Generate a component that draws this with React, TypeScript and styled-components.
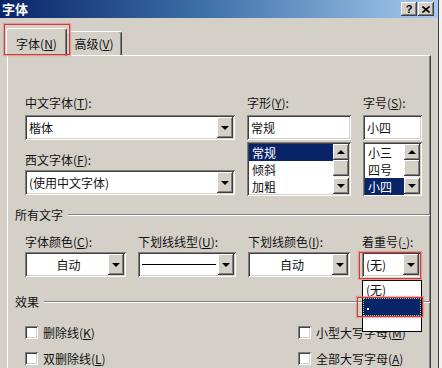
import React from 'react';
import styled, { createGlobalStyle, css } from 'styled-components';

const face = '#d4d0c8';
const shadow = '#808080';
const dark = '#404040';
const navy = '#0a246a';

const GlobalStyle = createGlobalStyle`
  html, body {
    margin: 0;
    padding: 0;
    height: 100%;
    overflow: hidden;
    background: #f2f2f2;
  }
  body {
    font-family: "Noto Sans CJK SC", "Liberation Sans", sans-serif;
    font-size: 12px;
    color: #111;
  }
  #root { height: 100%; }
`;

const raised = css`
  box-shadow: inset -1px -1px ${dark}, inset 1px 1px #fff, inset -2px -2px ${shadow},
    inset 2px 2px ${face};
`;

const sunken = css`
  box-shadow: inset 1px 1px ${shadow}, inset -1px -1px #fff, inset 2px 2px ${dark},
    inset -2px -2px ${face};
`;

const Dialog = styled.div`
  width: 439px;
  height: 368px;
  box-sizing: border-box;
  background: ${face};
  border-right: 1px solid ${dark};
  display: flex;
  flex-direction: column;
`;

const TitleBar = styled.div`
  height: 18px;
  flex-shrink: 0;
  display: flex;
  align-items: center;
  padding: 0 4px 0 2px;
  background: linear-gradient(to right, #0a246a 0%, #3a6ea5 45%, #a6caf0 100%);
`;

const Title = styled.span`
  flex: 1;
  color: #fff;
  font-weight: bold;
  font-size: 13px;
  line-height: 18px;
`;

const CaptionButton = styled.div`
  width: 16px;
  height: 14px;
  margin-left: 1px;
  background: ${face};
  ${raised};
  display: flex;
  align-items: center;
  justify-content: center;
  font-family: "Liberation Sans", sans-serif;
  font-weight: bold;
  font-size: 11px;
  color: #000;
`;

const Body = styled.div`
  flex: 1;
  display: flex;
  flex-direction: column;
  padding: 10px 7px 0 7px;
`;

const TabStrip = styled.div`
  height: 27px;
  display: flex;
  align-items: flex-end;
`;

const Tab = styled.div<{ $active?: boolean }>`
  position: relative;
  box-sizing: border-box;
  display: flex;
  align-items: center;
  justify-content: center;
  background: ${face};
  border-top: 1px solid #fff;
  border-left: 1px solid #fff;
  border-right: 1px solid ${dark};
  box-shadow: inset -1px 0 ${shadow};
  border-radius: 3px 3px 0 0;
  white-space: nowrap;
  ${(p) =>
    p.$active
      ? css`
          width: 61px;
          height: 28px;
          margin-left: -1px;
          margin-bottom: -1px;
          padding-top: 2px;
          z-index: 2;
        `
      : css`
          width: 55px;
          height: 24px;
          border-left: none;
        `}
`;

const Key = styled.span<{ $latin?: boolean }>`
  text-decoration: underline;
  text-underline-offset: 1px;
  ${(p) => p.$latin && `font-family: "Liberation Sans", sans-serif;`}
`;

const Panel = styled.div`
  flex: 1;
  position: relative;
  border-top: 1px solid #fff;
  border-left: 1px solid #fff;
  border-right: 1px solid ${dark};
  box-shadow: inset -1px 0 ${shadow};
  padding: 40px 0 0 7px;
  display: flex;
  flex-direction: column;
`;

const Group = styled.div<{ $mt?: number }>`
  display: flex;
  gap: 12px;
  padding-left: 10px;
  margin-top: ${(p) => p.$mt ?? 0}px;
`;

const Field = styled.div<{ $w: number }>`
  position: relative;
  width: ${(p) => p.$w}px;
  display: flex;
  flex-direction: column;
`;

const Label = styled.div<{ $mt?: number }>`
  height: 14px;
  line-height: 14px;
  white-space: nowrap;
  margin-top: ${(p) => p.$mt ?? 0}px;
`;

const ComboBox = styled.div<{ $mt?: number }>`
  position: relative;
  height: 25px;
  box-sizing: border-box;
  padding: 2px;
  margin-top: ${(p) => p.$mt ?? 3}px;
  background: #fff;
  ${sunken};
  display: flex;
`;

const ComboText = styled.div<{ $center?: boolean }>`
  flex: 1;
  display: flex;
  align-items: center;
  padding-left: 2px;
  justify-content: ${(p) => (p.$center ? 'center' : 'flex-start')};
  white-space: nowrap;
  overflow: hidden;
`;

const LineSample = styled.div`
  flex: 1;
  align-self: center;
  height: 1px;
  margin: 0 2px 0 2px;
  background: #000;
`;

const DropButton = styled.div`
  width: 16px;
  background: ${face};
  ${raised};
  display: flex;
  align-items: center;
  justify-content: center;
`;

const Arrow = styled.span<{ $up?: boolean }>`
  width: 0;
  height: 0;
  border-left: 4px solid transparent;
  border-right: 4px solid transparent;
  ${(p) =>
    p.$up ? `border-bottom: 4px solid #000;` : `border-top: 4px solid #000;`}
`;

const TextBox = styled.div`
  height: 25px;
  box-sizing: border-box;
  margin-top: 5px;
  padding: 2px 4px;
  background: #fff;
  ${sunken};
  display: flex;
  align-items: center;
`;

const ListBox = styled.div`
  height: 54px;
  margin-top: 2px;
  box-sizing: border-box;
  padding: 2px;
  background: #fff;
  ${sunken};
  display: flex;
  overflow: hidden;
`;

const Items = styled.div`
  flex: 1;
  display: flex;
  flex-direction: column;
`;

const Item = styled.div<{ $selected?: boolean }>`
  height: 17px;
  line-height: 17px;
  flex-shrink: 0;
  padding-left: 3px;
  white-space: nowrap;
  background: ${(p) => (p.$selected ? navy : 'transparent')};
  color: ${(p) => (p.$selected ? '#fff' : '#111')};
`;

const ScrollBar = styled.div`
  width: 16px;
  display: flex;
  flex-direction: column;
  background: repeating-conic-gradient(#fff 0 25%, #e6e3de 0 50%) 0 0 / 2px 2px;
`;

const ScrollButton = styled.div`
  height: 16px;
  flex-shrink: 0;
  background: ${face};
  ${raised};
  display: flex;
  align-items: center;
  justify-content: center;
`;

const Thumb = styled.div`
  height: 16px;
  flex-shrink: 0;
  background: ${face};
  ${raised};
`;

const Track = styled.div`
  flex: 1;
`;

const Section = styled.div<{ $mt: number }>`
  height: 14px;
  line-height: 14px;
  margin-top: ${(p) => p.$mt}px;
  display: flex;
  align-items: center;
  gap: 5px;
`;

const SectionLine = styled.div`
  flex: 1;
  border-top: 1px solid ${shadow};
  border-bottom: 1px solid #fff;
`;

const Effects = styled.div`
  display: grid;
  grid-template-columns: 273px auto;
  row-gap: 12px;
  margin-top: 16px;
  padding-left: 10px;
`;

const Check = styled.div`
  display: flex;
  align-items: center;
  gap: 5px;
  height: 14px;
  white-space: nowrap;
`;

const CheckBox = styled.span`
  width: 13px;
  height: 13px;
  box-sizing: border-box;
  background: #fff;
  ${sunken};
`;

const DropList = styled.div`
  position: absolute;
  top: calc(100% + 3px);
  left: 0;
  width: 60px;
  height: 52px;
  box-sizing: border-box;
  border: 1px solid #000;
  background: #fff;
  z-index: 5;
  display: flex;
  flex-direction: column;
`;

const DropItem = styled.div<{ $selected?: boolean; $h: number }>`
  position: relative;
  height: ${(p) => p.$h}px;
  line-height: ${(p) => p.$h}px;
  padding-left: 3px;
  box-sizing: border-box;
  ${(p) =>
    p.$selected &&
    css`
      background: ${navy};
      color: #fff;
      outline: 1px dotted #c9c27a;
      outline-offset: -1px;
    `}
`;

const Dot = styled.span`
  display: inline-block;
  width: 2px;
  height: 2px;
  margin: 0 0 2px 1px;
  background: #fff;
`;

const Mark = styled.div<{ $t: number; $r: number; $b: number; $l: number }>`
  position: absolute;
  top: ${(p) => p.$t}px;
  right: ${(p) => p.$r}px;
  bottom: ${(p) => p.$b}px;
  left: ${(p) => p.$l}px;
  border: 1px solid #d23a3a;
  box-shadow: 0 0 1px 1px rgba(225, 120, 120, 0.55);
  pointer-events: none;
  z-index: 6;
`;

const Combo: React.FC<{ children?: React.ReactNode; mt?: number }> = ({
  children,
  mt,
}) => (
  <ComboBox $mt={mt}>
    {children}
    <DropButton>
      <Arrow />
    </DropButton>
  </ComboBox>
);

const List: React.FC<{ items: string[]; selected: number }> = ({
  items,
  selected,
}) => (
  <ListBox>
    <Items>
      {items.map((it, i) => (
        <Item key={it} $selected={i === selected}>
          {it}
        </Item>
      ))}
    </Items>
    <ScrollBar>
      <ScrollButton>
        <Arrow $up />
      </ScrollButton>
      <Thumb />
      <Track />
      <ScrollButton>
        <Arrow />
      </ScrollButton>
    </ScrollBar>
  </ListBox>
);

export default function App() {
  return (
    <>
      <GlobalStyle />
      <Dialog>
        <TitleBar>
          <Title>字体</Title>
          <CaptionButton>?</CaptionButton>
          <CaptionButton>
            <svg width="8" height="7" viewBox="0 0 8 7">
              <path d="M0.5 0.5 L7.5 6.5 M7.5 0.5 L0.5 6.5" stroke="#000" strokeWidth="1.6" />
            </svg>
          </CaptionButton>
        </TitleBar>
        <Body>
          <TabStrip>
            <Tab $active>
              字体(<Key>N</Key>)
              <Mark $t={-5} $r={-4} $b={1} $l={-3} />
            </Tab>
            <Tab>
              高级(<Key>V</Key>)
            </Tab>
          </TabStrip>
          <Panel>
            <Group>
              <Field $w={210}>
                <Label>
                  中文字体(<Key>T</Key>):
                </Label>
                <Combo mt={5}>
                  <ComboText>楷体</ComboText>
                </Combo>
                <Label $mt={13}>
                  西文字体(<Key>F</Key>):
                </Label>
                <Combo>
                  <ComboText>(使用中文字体)</ComboText>
                </Combo>
              </Field>
              <Field $w={104}>
                <Label>
                  字形(<Key>Y</Key>):
                </Label>
                <TextBox>常规</TextBox>
                <List items={['常规', '倾斜', '加粗']} selected={0} />
              </Field>
              <Field $w={59}>
                <Label>
                  字号(<Key>S</Key>):
                </Label>
                <TextBox>小四</TextBox>
                <List items={['小三', '四号', '小四']} selected={2} />
              </Field>
            </Group>

            <Section $mt={12}>
              所有文字
              <SectionLine />
            </Section>

            <Group $mt={13}>
              <Field $w={101}>
                <Label>
                  字体颜色(<Key>C</Key>):
                </Label>
                <Combo>
                  <ComboText $center>自动</ComboText>
                </Combo>
              </Field>
              <Field $w={98}>
                <Label>
                  下划线线型(<Key>U</Key>):
                </Label>
                <Combo>
                  <LineSample />
                </Combo>
              </Field>
              <Field $w={102}>
                <Label>
                  下划线颜色(<Key>I</Key>):
                </Label>
                <Combo>
                  <ComboText $center>自动</ComboText>
                </Combo>
              </Field>
              <Field $w={59}>
                <Label>
                  着重号(<Key $latin>·</Key>):
                </Label>
                <ComboBox $mt={3}>
                  <ComboText>(无)</ComboText>
                  <DropButton>
                    <Arrow />
                  </DropButton>
                  <Mark $t={0} $r={0} $b={-2} $l={-3} />
                  <DropList>
                    <DropItem $h={17}>(无)</DropItem>
                    <DropItem $h={18} $selected>
                      <Dot />
                      <Mark $t={-1} $r={-2} $b={-1} $l={-6} />
                    </DropItem>
                    <DropItem $h={15} />
                  </DropList>
                </ComboBox>
              </Field>
            </Group>

            <Section $mt={18}>
              效果
              <SectionLine />
            </Section>

            <Effects>
              <Check>
                <CheckBox />
                <span>
                  删除线(<Key>K</Key>)
                </span>
              </Check>
              <Check>
                <CheckBox />
                <span>
                  小型大写字母(<Key>M</Key>)
                </span>
              </Check>
              <Check>
                <CheckBox />
                <span>
                  双删除线(<Key>L</Key>)
                </span>
              </Check>
              <Check>
                <CheckBox />
                <span>
                  全部大写字母(<Key>A</Key>)
                </span>
              </Check>
            </Effects>
          </Panel>
        </Body>
      </Dialog>
    </>
  );
}
